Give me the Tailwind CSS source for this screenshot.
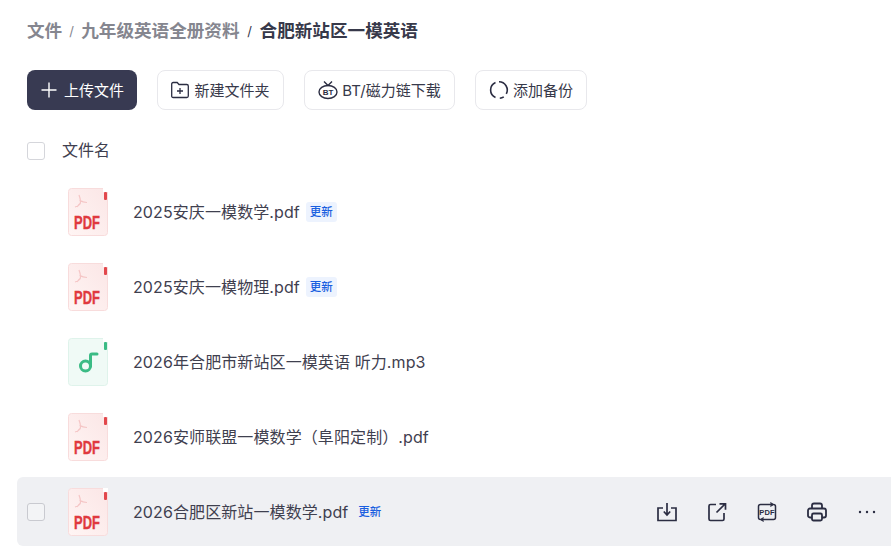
<!DOCTYPE html>
<html lang="zh-CN">
<head>
    <meta charset="UTF-8">
    <title>合肥新站区一模英语</title>
    <script src="https://cdn.jsdelivr.net/npm/@tailwindcss/browser@4"></script>
</head>
<body class="bg-white overflow-hidden h-[560px] font-['Inter','Noto_Sans_CJK_SC',sans-serif] text-[#3f404f]">
    <!-- shared file icons -->
    <svg class="w-0 h-0">
        <defs>
            <linearGradient id="pdf-bg" x1="1" y1="0" x2="0" y2="1">
                <stop offset="0" stop-color="#fbe6e6"/>
                <stop offset="1" stop-color="#fff5f4"/>
            </linearGradient>
        </defs>
        <symbol id="icon-pdf" viewBox="0 0 40 48">
            <rect x="0.5" y="0.5" width="39" height="47" rx="3" fill="url(#pdf-bg)" stroke="#f8dcdc"/>
            <path d="M35 0h5v4h-5z" fill="#fff"/>
            <rect x="36" y="4" width="3" height="8" rx="1" fill="#e2474c"/>
            <path d="M11 7c1.500 4 2 7 1 9c-1 1.500-3 2.500-5 3M11.500 12c2 1.500 4.500 2.500 7.500 2.500M12 15.500c-1 .5-2 2-3 3.500" fill="none" stroke="#f5c6c6" stroke-width="1.200"/>
            <text x="19" y="41" text-anchor="middle" font-family="Liberation Sans" font-weight="700" font-size="18" textLength="26" lengthAdjust="spacingAndGlyphs" fill="#e0393e" stroke="#e0393e" stroke-width="0.4">PDF</text>
        </symbol>
        <symbol id="icon-music" viewBox="0 0 40 48">
            <rect x="0.5" y="0.5" width="39" height="47" rx="3" fill="#f0faf6" stroke="#dff3eb"/>
            <path d="M35 0h5v4h-5z" fill="#fff"/>
            <rect x="36" y="4" width="3" height="8" rx="1" fill="#3bbb85"/>
            <circle cx="17.500" cy="28" r="5" fill="none" stroke="#3bbb85" stroke-width="3"/>
            <path d="M22.500 28V17.500c0-1 .6-1.500 1.500-1.500H29" fill="none" stroke="#3bbb85" stroke-width="3" stroke-linecap="round"/>
        </symbol>
    </svg>

    <div class="pl-[27px] pt-[19px]">
        <!-- Breadcrumb -->
        <nav class="flex items-center h-6 text-[17.600px] font-bold leading-6">
            <span class="text-[#85868f]">文件</span>
            <span class="w-[19px] text-center text-[13px] font-normal text-[#85868f]">/</span>
            <span class="text-[#85868f]">九年级英语全册资料</span>
            <span class="w-[20px] text-center text-[13px] font-normal text-[#37394a]">/</span>
            <span class="text-[#37394a]">合肥新站区一模英语</span>
        </nav>

        <!-- Toolbar -->
        <div class="flex gap-5 mt-[27px] text-[#37394a]">
            <button class="flex items-center justify-center gap-[6px] w-[110px] h-10 rounded-lg bg-[#383a52] text-white text-[15px]">
                <svg width="18" height="18" viewBox="0 0 18 18" fill="none" stroke="#fff" stroke-width="1.400"><path d="M9 1.500v15M1.500 9h15"/></svg>
                <span class="mt-0.5">上传文件</span>
            </button>
            <button class="flex items-center justify-center gap-[5px] w-[127px] h-10 rounded-lg border border-[#e8e8ec] text-[15px]">
                <svg width="18" height="18" viewBox="0 0 18 18" fill="none" stroke="#2b2d42" stroke-width="1.300"><path d="M.7 3c0-1 .5-1.500 1.500-1.500h4L8 3.500h7.800c1 0 1.500.5 1.500 1.500v10c0 1-.5 1.500-1.500 1.500H2.200c-1 0-1.500-.5-1.500-1.500zM9 7v6M6 10h6"/></svg>
                <span class="mt-0.5">新建文件夹</span>
            </button>
            <button class="flex items-center justify-center gap-[4px] w-[151px] h-10 rounded-lg border border-[#e8e8ec] text-[15px]">
                <svg width="20" height="20" viewBox="0 0 20 20" fill="none" stroke="#2b2d42" stroke-width="1.400">
                    <ellipse cx="10" cy="12" rx="9" ry="6.500"/>
                    <path d="M6 1.500L10 5.500l4-4"/>
                    <text x="10" y="14.800" text-anchor="middle" font-family="Liberation Sans" font-weight="700" font-size="8" fill="#2b2d42" stroke="none">BT</text>
                </svg>
                <span class="mt-0.5">BT/磁力链下载</span>
            </button>
            <button class="flex items-center justify-center gap-[4px] w-[112px] h-10 rounded-lg border border-[#e8e8ec] text-[15px]">
                <svg width="20" height="20" viewBox="0 0 20 20" fill="none" stroke="#2b2d42" stroke-width="1.600"><path d="M6.500 2.500A8.200 8.200 0 0 0 6.500 17.500M10 1.800a8.200 8.200 0 0 1 7.300 12M14.800 16.800a8.200 8.200 0 0 1-4 1.400"/></svg>
                <span class="mt-0.5">添加备份</span>
            </button>
        </div>

        <!-- Header row -->
        <div class="flex items-center h-[18px] mt-[32px] text-[16px]">
            <span class="w-[18px] h-[18px] rounded-[3px] border border-[#d5d6db] bg-white"></span>
            <span class="ml-[17px] -mt-0.5">文件名</span>
        </div>
    </div>

    <!-- File list -->
    <ul class="mt-[17px] flex flex-col gap-[5px] pl-[17px] text-[16px] tracking-[0.1px]">
        <li class="flex items-center h-[70px]">
            <svg class="ml-[51px]" width="40" height="48"><use href="#icon-pdf"/></svg>
            <span class="ml-[25px]">2025安庆一模数学.pdf</span>
            <span class="ml-[6px] w-[31px] text-center h-5 leading-5 rounded-[3px] bg-[#edf3fe] text-[#1a5fe0] text-[11.500px] font-medium">更新</span>
        </li>
        <li class="flex items-center h-[70px]">
            <svg class="ml-[51px]" width="40" height="48"><use href="#icon-pdf"/></svg>
            <span class="ml-[25px]">2025安庆一模物理.pdf</span>
            <span class="ml-[6px] w-[31px] text-center h-5 leading-5 rounded-[3px] bg-[#edf3fe] text-[#1a5fe0] text-[11.500px] font-medium">更新</span>
        </li>
        <li class="flex items-center h-[70px]">
            <svg class="ml-[51px]" width="40" height="48"><use href="#icon-music"/></svg>
            <span class="ml-[25px]">2026年合肥市新站区一模英语 听力.mp3</span>
        </li>
        <li class="flex items-center h-[70px]">
            <svg class="ml-[51px]" width="40" height="48"><use href="#icon-pdf"/></svg>
            <span class="ml-[25px]">2026安师联盟一模数学（阜阳定制）.pdf</span>
        </li>
        <li class="flex items-center h-[69px] pt-px bg-[#eff0f3] rounded-l-md pl-[10px]">
            <span class="w-[18px] h-[18px] rounded-[3px] border border-[#c9cad0] bg-[#f3f4f6]"></span>
            <svg class="ml-[23px]" width="40" height="48"><use href="#icon-pdf"/></svg>
            <span class="ml-[25px]">2026合肥区新站一模数学.pdf</span>
            <span class="ml-[6px] w-[31px] text-center h-5 leading-5 text-[#1a5fe0] text-[11.500px] font-medium">更新</span>
            <div class="ml-auto flex items-center gap-[30px] pr-[14px]">
                <svg width="20" height="20" viewBox="0 0 20 20" fill="none" stroke="#2b2d42" stroke-width="1.700"><path d="M6 6H1v12.500h18V6h-5M10 1v11.500M6.800 9.500l3.200 3.500 3.200-3.500"/></svg>
                <svg width="20" height="20" viewBox="0 0 20 20" fill="none" stroke="#2b2d42" stroke-width="1.700"><path d="M9 2.500H3.500c-1 0-1.500.5-1.500 1.500v13c0 1 .5 1.500 1.500 1.500h12c1 0 1.500-.5 1.500-1.500v-6M9.500 10.500l8-8M12.500 1.800h6v6"/></svg>
                <svg width="20" height="20" viewBox="0 0 20 20" fill="none" stroke="#2b2d42" stroke-width="1.500">
                    <rect x="1.500" y="2.500" width="17" height="15" rx="2"/>
                    <path d="M13.500 .5l3 2-3 2M6.500 15.500l-3 2 3 2" fill="#2b2d42" stroke-width="1"/>
                    <text x="10" y="13" text-anchor="middle" font-family="Liberation Sans" font-weight="700" font-size="7.500" fill="#2b2d42" stroke="none">PDF</text>
                </svg>
                <svg width="20" height="20" viewBox="0 0 20 20" fill="none" stroke="#2b2d42" stroke-width="1.800"><path d="M5 6.500V3.500C5 2 5.500 1.500 7 1.500h6c1.500 0 2 .5 2 2v3M5 15.500H3c-1.200 0-2-.8-2-2V8.500c0-1.200.8-2 2-2h14c1.200 0 2 .8 2 2v5c0 1.200-.8 2-2 2h-2"/><rect x="5" y="11.500" width="10" height="7" rx="1.500"/></svg>
                <svg width="20" height="20" viewBox="0 0 20 20" fill="#2b2d42"><circle cx="3" cy="10" r="1.200"/><circle cx="10" cy="10" r="1.200"/><circle cx="17" cy="10" r="1.200"/></svg>
            </div>
        </li>
    </ul>
</body>
</html>
